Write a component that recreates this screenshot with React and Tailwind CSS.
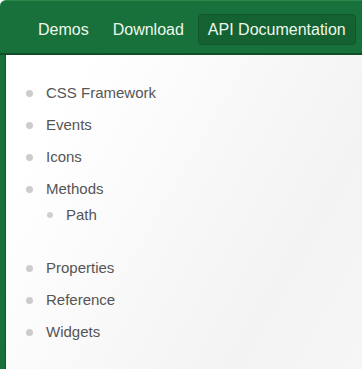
import React from "react";

const items = [
  { label: "CSS Framework" },
  { label: "Events" },
  { label: "Icons" },
  { label: "Methods", children: ["Path"] },
  { label: "Properties" },
  { label: "Reference" },
  { label: "Widgets" },
];

function Bullet({ small }) {
  return (
    <span
      className={
        small
          ? "inline-block w-[6px] h-[6px] rounded-full bg-[#d0d0d0]"
          : "inline-block w-[7px] h-[7px] rounded-full bg-[#cccccc]"
      }
    />
  );
}

export default function App() {
  return (
    <div
      className="w-[362px] h-[369px] overflow-hidden bg-[#18703a] flex flex-col rounded-tl-[6px] border-t border-[#2a8a4a]"
      style={{ fontFamily: '"Liberation Sans", Arial, sans-serif' }}
    >
      <nav className="h-[54px] shrink-0 flex items-start pt-[13px] pl-[28px] gap-[4px] border-b-2 border-[#0f4f27]">
        <a className="h-[31px] px-[9px] flex items-center text-[16px] text-[#eef8ee] border border-transparent">
          Demos
        </a>
        <a className="h-[31px] px-[9px] flex items-center text-[16px] text-[#eef8ee] border border-transparent">
          Download
        </a>
        <a className="h-[31px] px-[9px] flex items-center text-[16px] text-[#eef8ee] bg-[#146231] border border-[#11562b] rounded-[4px]">
          API Documentation
        </a>
      </nav>
      <div className="flex-1 ml-[5px] bg-[linear-gradient(120deg,#ffffff_15%,#f3f3f3_75%,#f6f6f6_100%)] border-l border-[#0f5a2b] pt-[22px]">
        <ul>
          {items.map((it) => (
            <li key={it.label}>
              <div className="flex items-center h-[32px] pl-[20px] text-[15px] text-[#555555]">
                <Bullet />
                <span className="ml-[13px]">{it.label}</span>
              </div>
              {it.children && (
                <ul className="mb-[27px]">
                  {it.children.map((c) => (
                    <li
                      key={c}
                      className="flex items-center h-[20px] pl-[41px] text-[15px] text-[#555555]"
                    >
                      <Bullet small />
                      <span className="ml-[13px]">{c}</span>
                    </li>
                  ))}
                </ul>
              )}
            </li>
          ))}
        </ul>
      </div>
    </div>
  );
}
